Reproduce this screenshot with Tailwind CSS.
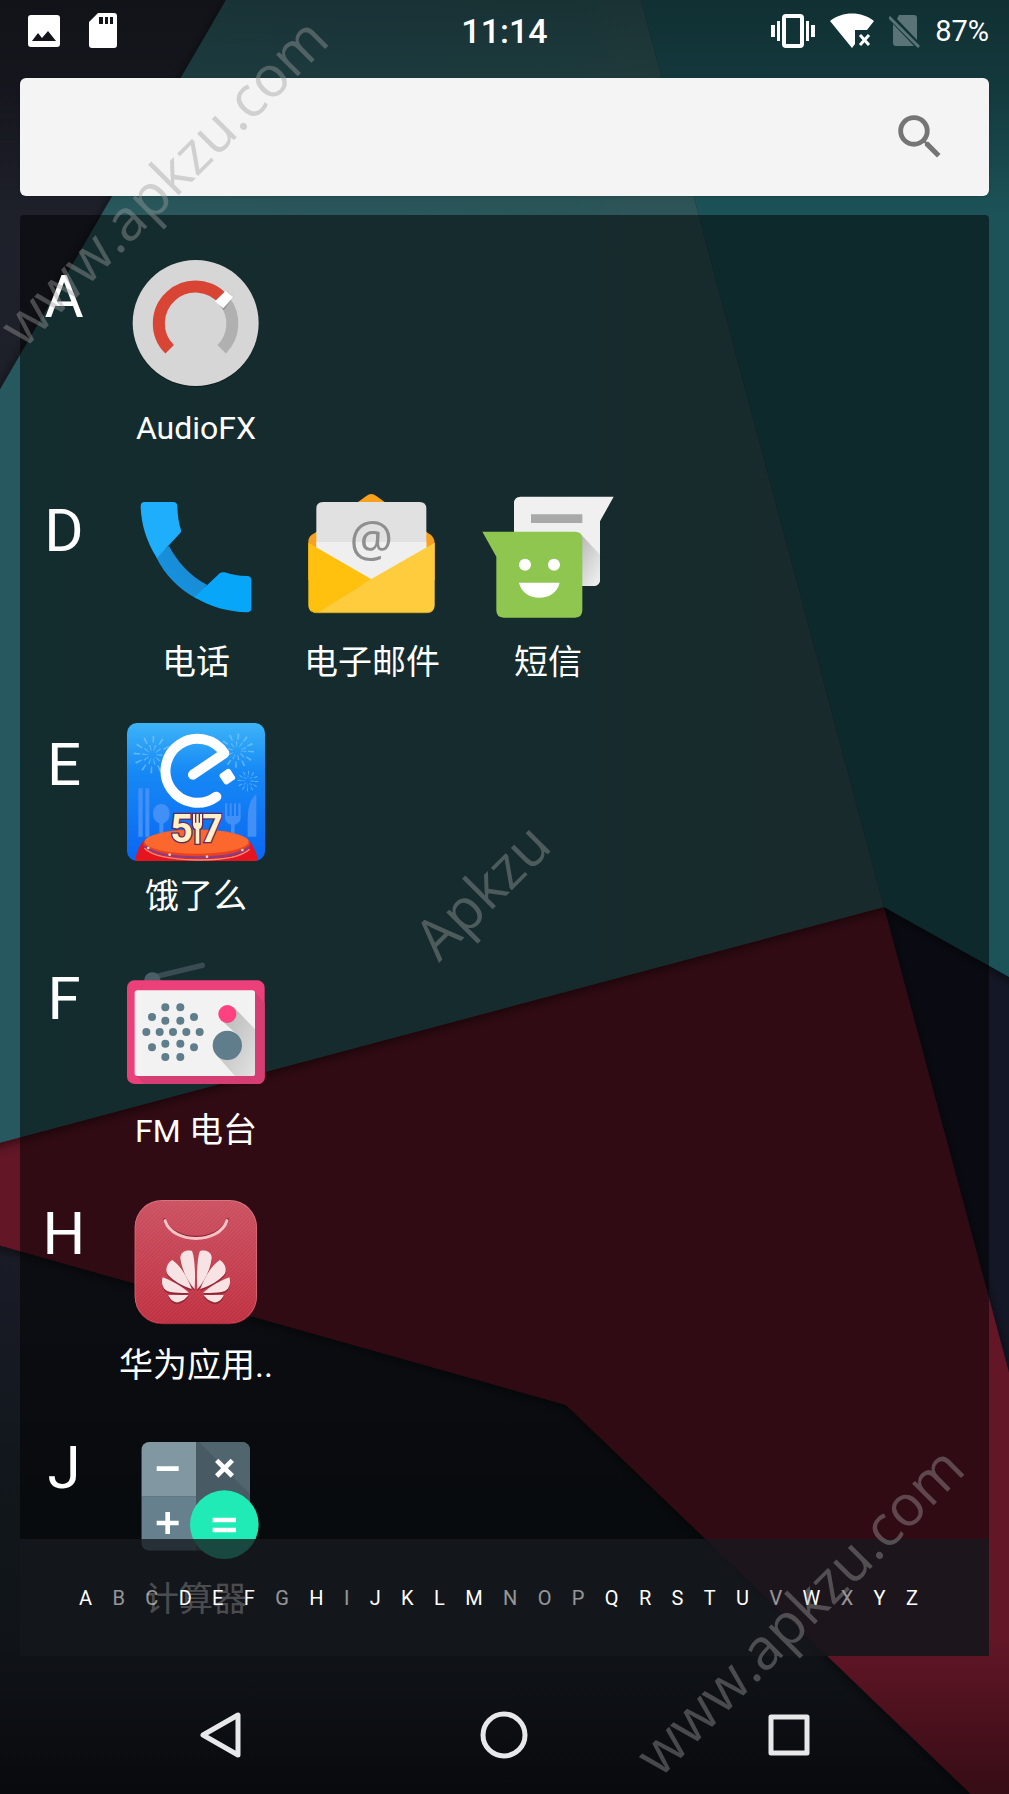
<!DOCTYPE html>
<html lang="zh-CN">

<head>
    <meta charset="UTF-8" />
    <meta name="viewport" content="width=device-width, initial-scale=1" />
    <title>App drawer</title>
    <script src="https://cdn.jsdelivr.net/npm/@tailwindcss/browser@4"></script>
</head>

<body class="relative flex h-screen flex-col overflow-hidden bg-[#14161d] font-[Roboto,'Noto_Sans_CJK_SC',sans-serif] text-white">
    <!-- wallpaper -->
    <svg class="absolute inset-0 -z-10 h-full w-full" viewBox="0 0 1009 1794" preserveAspectRatio="xMidYMid slice" aria-hidden="true">
        <defs>
            <linearGradient id="night" x1="0" y1="0" x2="0" y2="1">
                <stop offset="0" stop-color="#1f212b" />
                <stop offset="0.7" stop-color="#191b26" />
                <stop offset="0.85" stop-color="#10161a" />
                <stop offset="1" stop-color="#101218" />
            </linearGradient>
            <linearGradient id="scrimTop" x1="0" y1="0" x2="0" y2="1">
                <stop offset="0" stop-color="#000" stop-opacity="0.42" />
                <stop offset="0.4" stop-color="#000" stop-opacity="0.32" />
                <stop offset="1" stop-color="#000" stop-opacity="0" />
            </linearGradient>
            <linearGradient id="scrimBottom" x1="0" y1="0" x2="0" y2="1">
                <stop offset="0" stop-color="#000" stop-opacity="0" />
                <stop offset="1" stop-color="#000" stop-opacity="0.45" />
            </linearGradient>
            <linearGradient id="tealMain" x1="0" y1="0" x2="1" y2="0">
                <stop offset="0" stop-color="#28595e" />
                <stop offset="0.6" stop-color="#2b565a" />
                <stop offset="1" stop-color="#325558" />
            </linearGradient>
            <filter id="edge" x="-5%" y="-5%" width="110%" height="110%">
                <feDropShadow dx="0" dy="2" stdDeviation="6" flood-color="#000" flood-opacity="0.6" />
            </filter>
        </defs>
        <rect width="1009" height="1794" fill="url(#night)" />
        <path d="M884 907 1009 977V1380L884 907Z" fill="#141725" />
        <path d="M-20 1100 884 880V907L1029 1447V1850L566 1405 -20 1240Z" fill="#621426" filter="url(#edge)" />
        <g filter="url(#edge)">
            <path d="M226 0H641L884 907 -20 1148V424Z" fill="url(#tealMain)" />
            <path d="M641 0H1029V988L884 907Z" fill="#1b5259" />
        </g>
        <rect width="1009" height="215" fill="url(#scrimTop)" />
        <rect y="1640" width="1009" height="154" fill="url(#scrimBottom)" />
    </svg>

    <!-- status bar -->
    <header class="grid h-[62px] shrink-0 grid-cols-3 items-center px-5">
        <div class="flex items-center gap-7 pl-2">
            <svg class="h-8 w-8" viewBox="0 0 32 32" fill="#fff">
                <path fill-rule="evenodd" d="M3 0H29a3 3 0 0 1 3 3V29a3 3 0 0 1-3 3H3a3 3 0 0 1-3-3V3a3 3 0 0 1 3-3ZM4 26H28L20 16 14 23 10 18Z" />
            </svg>
            <svg class="h-9 w-[30px]" viewBox="0 0 30 36" fill="#fff">
                <path fill-rule="evenodd" d="M10 0H26a3 3 0 0 1 3 3V32a3 3 0 0 1-3 3H4a3 3 0 0 1-3-3V9ZM11 4v7h4V4ZM17 4v7h3V4ZM22 4v7h3V4Z" />
            </svg>
        </div>
        <time class="text-center text-[34px] leading-10 font-medium">11:14</time>
        <div class="flex items-center justify-end gap-[15px]">
            <svg class="h-9 w-11" viewBox="0 0 44 36" fill="#fff">
                <path d="M0 12h4v12H0ZM6 8h3v20H6ZM40 12h4v12h-4ZM35 8h3v20h-3Z" />
                <rect x="13" y="3" width="18" height="30" rx="2" fill="none" stroke="#fff" stroke-width="4" />
            </svg>
            <svg class="h-9 w-11" viewBox="0 0 44 36">
                <path d="M0 8C12-2 32-2 44 8L37 17H25V31L22 35Z" fill="#fff" />
                <path d="M30 22 39 32M39 22 30 32" stroke="#fff" stroke-width="3" />
            </svg>
            <svg class="h-9 w-[31px]" viewBox="0 0 31 36">
                <path d="M10 2H25a3 3 0 0 1 3 3V27L8 6ZM4 11 25 33H7a3 3 0 0 1-3-3Z" fill="#5a7376" />
                <path d="M0 4 30 34" stroke="#5a7376" stroke-width="3" />
            </svg>
            <span class="text-[29px] leading-10">87%</span>
        </div>
    </header>

    <!-- search -->
    <form class="mx-5 mt-4 flex h-[118px] shrink-0 items-center rounded-md bg-[#f4f4f4] pr-10 pl-8 shadow">
        <input type="search" aria-label="搜索" class="h-full min-w-0 flex-1 bg-transparent text-[34px] text-gray-800 outline-none" />
        <button type="submit" aria-label="搜索">
            <svg class="h-[58px] w-[58px]" viewBox="0 0 24 24" fill="#757575">
                <path d="M15.5 14h-.79l-.28-.27A6.47 6.47 0 0 0 16 9.5 6.5 6.5 0 1 0 9.5 16c1.61 0 3.09-.59 4.23-1.57l.27.28v.79l5 4.99L20.49 19l-4.99-5zm-6 0C7.01 14 5 11.99 5 9.5S7.01 5 9.5 5 14 7.01 14 9.5 11.99 14 9.5 14z" />
            </svg>
        </button>
    </form>

    <!-- app list -->
    <main class="relative mx-5 mt-[19px] min-h-0 flex-1 overflow-hidden rounded-t bg-black/50">
        <div class="flex flex-col gap-[41px] pt-10">
            <section class="flex">
                <h2 class="w-[88px] pt-3 text-center text-[60px] leading-[60px]">A</h2>
                <a href="#audiofx" class="flex w-44 flex-col items-center gap-[15px]">
                    <svg class="h-[138px] w-[138px]" viewBox="84 45 414 414">
                        <circle cx="290" cy="252" r="189" fill="#0006" />
                        <circle cx="290" cy="249" r="189" fill="#d6d6d6" />
                        <g fill="none" stroke-width="36">
                            <path d="M212 328A110 110 0 1 1 376 182" stroke="#d84535" />
                            <path d="M376 182A110 110 0 0 1 368 328" stroke="#b0b0b0" />
                        </g>
                        <path d="M352 184 382 152 404 170 374 210Z" fill="#0003" />
                        <path d="M348 184 380 152 403 171 373 205Z" fill="#fff" />
                    </svg>
                    <span class="text-[32px] leading-10">AudioFX</span>
                </a>
            </section>

            <section class="flex">
                <h2 class="w-[88px] pt-3 text-center text-[60px] leading-[60px]">D</h2>
                <a href="#phone" class="flex w-44 flex-col items-center gap-[15px]">
                    <svg class="h-[138px] w-[138px]" viewBox="24 27 414 414">
                        <defs>
                            <linearGradient id="handle" x1="0" y1="1" x2="1" y2="0">
                                <stop offset="0" stop-color="#1496e6" />
                                <stop offset="1" stop-color="#1c86cc" />
                            </linearGradient>
                        </defs>
                        <path d="M110 228 150 198C176 246 212 288 264 314L234 356C180 328 136 284 110 228Z" fill="url(#handle)" />
                        <path d="M77 66H163Q174 66 175 78C176 104 178 126 186 150Q187 156 183 160L114 234C80 182 66 126 65 79Q65 66 77 66Z" fill="#1eaefc" />
                        <path d="M226 352 302 280Q308 275 316 277C338 284 360 288 384 288Q397 288 397 301V384Q397 397 384 397C326 396 274 380 226 352Z" fill="#08a6f8" />
                    </svg>
                    <span class="text-[34px] leading-10">电话</span>
                </a>
                <a href="#email" class="flex w-44 flex-col items-center gap-[15px]">
                    <svg class="h-[138px] w-[138px]" viewBox="552 27 414 414">
                        <path d="M568 190Q566 168 586 160L742 48Q757 36 772 48L928 160Q947 170 947 190V300H568Z" fill="#f9a01f" />
                        <path d="M592 86Q592 66 612 66H902Q922 66 922 86V260L757 340 592 260Z" fill="#e1e1e1" />
                        <path d="M592 186H922V240L757 320 592 240Z" fill="#efefef" />
                        <text x="757" y="227" text-anchor="middle" font-family="'Open Sans', sans-serif" font-size="146" fill="#8f8f8f">@</text>
                        <path d="M568 188 757 298 600 398H590Q568 398 568 376Z" fill="#ffc10e" />
                        <path d="M947 188V376Q947 398 925 398H596L757 297Z" fill="#ffcc3e" />
                        <path d="M576 391Q582 398 590 398H925Q936 398 942 390" fill="none" stroke="#d9a520" stroke-width="3" />
                    </svg>
                    <span class="text-[34px] leading-10">电子邮件</span>
                </a>
                <a href="#messages" class="flex w-44 flex-col items-center gap-[15px]">
                    <svg class="h-[138px] w-[138px]" viewBox="1080 27 414 414">
                        <defs>
                            <linearGradient id="bubbleShade" x1="0" y1="0" x2="0.7" y2="1">
                                <stop offset="0" stop-color="#b5b5b5" />
                                <stop offset="1" stop-color="#ececec" />
                            </linearGradient>
                        </defs>
                        <path d="M1205 50H1484L1443 124V298Q1443 318 1423 318H1205Q1185 318 1185 298V70Q1185 50 1205 50Z" fill="#f0f0f0" />
                        <path d="M1385 162 1443 224V298Q1443 318 1423 318H1380Z" fill="url(#bubbleShade)" />
                        <path d="M1236 103H1390V129H1236Z" fill="#a9a9a9" />
                        <path d="M1090 155H1368Q1390 155 1390 177V391Q1390 413 1368 413H1154Q1132 413 1132 391V230Z" fill="#8fc64f" />
                        <circle cx="1218" cy="254" r="18" fill="#fff" />
                        <circle cx="1305" cy="254" r="18" fill="#fff" />
                        <path d="M1200 308H1322C1316 336 1292 353 1261 353S1206 336 1200 308Z" fill="#fff" />
                    </svg>
                    <span class="text-[34px] leading-10">短信</span>
                </a>
            </section>

            <section class="flex">
                <h2 class="w-[88px] pt-3 text-center text-[60px] leading-[60px]">E</h2>
                <a href="#eleme" class="flex w-44 flex-col items-center gap-[15px]">
                    <svg class="h-[138px] w-[138px]" viewBox="54 39 414 414">
                        <defs>
                            <linearGradient id="sky" x1="0" y1="0" x2="0" y2="1">
                                <stop offset="0" stop-color="#3db4f8" />
                                <stop offset="0.35" stop-color="#1689f5" />
                                <stop offset="1" stop-color="#0a66f2" />
                            </linearGradient>
                            <clipPath id="tile"><rect x="54" y="39" width="414" height="414" rx="30" /></clipPath>
                        </defs>
                        <g clip-path="url(#tile)">
                            <path d="M54 39H468V453H54Z" fill="url(#sky)" />
                            <!-- fireworks -->
                            <g fill="none" stroke="#8fd0ff" stroke-opacity="0.55">
                                <circle cx="130" cy="134" r="46" stroke-width="20" stroke-dasharray="5 19" />
                                <circle cx="130" cy="134" r="21" stroke-width="18" stroke-dasharray="3 10" />
                                <circle cx="384" cy="122" r="42" stroke-width="18" stroke-dasharray="5 17" />
                                <circle cx="384" cy="122" r="20" stroke-width="16" stroke-dasharray="3 10" />
                                <circle cx="417" cy="213" r="25" stroke-width="12" stroke-dasharray="3 10" />
                                <circle cx="417" cy="213" r="12" stroke-width="9" stroke-dasharray="2 7" />
                            </g>
                            <!-- cutlery -->
                            <g fill="#4090f8">
                                <path d="M88 235H101V380H88ZM109 235H121V380H109ZM348 280H355V318H362V280H368V318H375V280H381V318H388V280H395V325Q393 340 377 344V380H366V344Q350 340 348 325ZM442 252V380H416V330Q416 272 442 252Z" />
                                <ellipse cx="157" cy="311" rx="25" ry="30" />
                                <path d="M151 335H163V380H151Z" />
                            </g>
                            <!-- drum -->
                            <path d="M78 453Q86 412 104 392H420Q440 415 448 453Z" fill="#e5141f" />
                            <ellipse cx="263" cy="402" rx="160" ry="44" fill="#e8431d" />
                            <ellipse cx="263" cy="395" rx="156" ry="36" fill="#fb672c" />
                            <path d="M106 408Q140 440 262 442T422 410" fill="none" stroke="#8a3c8c" stroke-width="7" />
                            <path d="M106 415Q140 448 262 450T422 418" fill="none" stroke="#ff8b6a" stroke-width="4" />
                            <g fill="#ffd0b0">
                                <circle cx="118" cy="414" r="4" />
                                <circle cx="182" cy="434" r="4" />
                                <circle cx="294" cy="440" r="4" />
                                <circle cx="400" cy="420" r="4" />
                            </g>
                            <path d="M252 194 346 130A96 96 0 1 0 322 260" fill="none" stroke="#fff" stroke-width="30" stroke-linecap="round" stroke-linejoin="round" />
                            <rect x="336" y="181" width="38" height="38" rx="8" transform="rotate(-34 355 200)" fill="#fff" />
                            <g fill="#fff0c8" stroke="#5b2a5e" stroke-width="8" paint-order="stroke" font-family="Roboto, sans-serif" font-weight="700" font-size="118">
                                <text x="184" y="396">5</text>
                                <text x="274" y="396">7</text>
                                <path d="M252 312H258V338H262V312H269V338H273V312H279V345Q278 354 271 357V401H260V357Q253 354 252 345Z" />
                            </g>
                        </g>
                    </svg>
                    <span class="text-[34px] leading-10">饿了么</span>
                </a>
            </section>

            <section class="flex">
                <h2 class="w-[88px] pt-3 text-center text-[60px] leading-[60px]">F</h2>
                <a href="#fm" class="flex w-44 flex-col items-center gap-[15px]">
                    <svg class="h-[138px] w-[138px]" viewBox="54 21 414 414">
                        <defs>
                            <linearGradient id="knobShade" x1="0" y1="0" x2="1" y2="1">
                                <stop offset="0" stop-color="#b4b4b4" />
                                <stop offset="1" stop-color="#e2e2e2" />
                            </linearGradient>
                        </defs>
                        <path d="M130 82 280 46" stroke="#3a4b52" stroke-width="16" stroke-linecap="round" />
                        <path d="M105 92A25 25 0 0 1 155 92Z" fill="#4a5f68" />
                        <rect x="54" y="91" width="413" height="311" rx="22" fill="#ec407a" />
                        <path d="M437 125 467 160V380Q467 402 445 402H104L78 376Z" fill="#d63d72" />
                        <rect x="77" y="121" width="361" height="257" rx="8" fill="#f2f2f2" />
                        <path d="M375 172 438 238V370Q438 378 430 378H378L325 318 380 250 336 210Z" fill="url(#knobShade)" />
                        <circle cx="355" cy="192" r="27" fill="#ff4081" />
                        <circle cx="355" cy="286" r="44" fill="#607d8b" />
                        <g fill="#607d8b">
                            <circle cx="169" cy="172" r="12" />
                            <circle cx="214" cy="172" r="12" />
                            <circle cx="129" cy="201" r="12" />
                            <circle cx="169" cy="212" r="12" />
                            <circle cx="214" cy="212" r="12" />
                            <circle cx="255" cy="201" r="12" />
                            <circle cx="112" cy="246" r="12" />
                            <circle cx="152" cy="246" r="12" />
                            <circle cx="192" cy="246" r="12" />
                            <circle cx="232" cy="246" r="12" />
                            <circle cx="272" cy="246" r="12" />
                            <circle cx="129" cy="292" r="12" />
                            <circle cx="169" cy="281" r="12" />
                            <circle cx="214" cy="281" r="12" />
                            <circle cx="255" cy="292" r="12" />
                            <circle cx="169" cy="321" r="12" />
                            <circle cx="214" cy="321" r="12" />
                        </g>
                    </svg>
                    <span class="text-[34px] leading-10"><span class="text-[32px]">FM</span> 电台</span>
                </a>
            </section>

            <section class="flex">
                <h2 class="w-[88px] pt-3 text-center text-[60px] leading-[60px]">H</h2>
                <a href="#appgallery" class="flex w-44 flex-col items-center gap-[15px]">
                    <svg class="h-[138px] w-[138px]" viewBox="54 33 414 414">
                        <defs>
                            <linearGradient id="bag" x1="0" y1="0" x2="0" y2="1">
                                <stop offset="0" stop-color="#cb5060" />
                                <stop offset="1" stop-color="#bf2f40" />
                            </linearGradient>
                            <pattern id="weave" width="8" height="8" patternUnits="userSpaceOnUse" patternTransform="rotate(-45)">
                                <path d="M0 0H8V3H0Z" fill="#fff" fill-opacity="0.07" />
                            </pattern>
                            <g id="petals">
                                <path d="M257 325C260 280 257 228 249 210C232 205 213 213 214 232C217 264 236 302 257 325Z" />
                                <path d="M248 324C236 290 216 255 190 237C176 245 168 262 174 277C186 297 220 315 248 324Z" />
                                <path d="M240 335C216 315 186 298 161 289C156 305 160 322 174 330C192 336 220 337 240 335Z" />
                                <path d="M238 342H178C182 355 195 366 208 364C222 360 232 352 238 342Z" />
                            </g>
                        </defs>
                        <rect x="77" y="60" width="367" height="370" rx="82" fill="#8c1a2b" />
                        <rect x="77" y="57" width="367" height="370" rx="82" fill="#d8747f" />
                        <rect x="79" y="60" width="363" height="366" rx="80" fill="url(#bag)" />
                        <rect x="79" y="60" width="363" height="366" rx="80" fill="url(#weave)" />
                        <path d="M166 116C190 186 332 186 356 116" fill="none" stroke="#8f2634" stroke-width="9" stroke-linecap="round" />
                        <path d="M168 119C192 190 330 190 354 119" fill="none" stroke="#f5c3c6" stroke-width="9" stroke-linecap="round" />
                        <g fill="#7c1c29" fill-opacity="0.7" transform="translate(0 5)">
                            <use href="#petals" />
                            <use href="#petals" transform="matrix(-1 0 0 1 522 0)" />
                        </g>
                        <g fill="#f7e3e3">
                            <use href="#petals" />
                            <use href="#petals" transform="matrix(-1 0 0 1 522 0)" />
                        </g>
                    </svg>
                    <span class="text-[34px] leading-10">华为应用..</span>
                </a>
            </section>

            <section class="flex">
                <h2 class="w-[88px] pt-3 text-center text-[60px] leading-[60px]">J</h2>
                <a href="#calculator" class="flex w-44 flex-col items-center gap-[15px]">
                    <svg class="h-[138px] w-[138px]" viewBox="384 75 414 414">
                        <defs>
                            <clipPath id="keys"><rect x="427" y="123" width="326" height="326" rx="24" /></clipPath>
                        </defs>
                        <g clip-path="url(#keys)">
                            <path d="M427 123H591V287H427Z" fill="#8198a3" />
                            <path d="M427 287H591V449H427Z" fill="#66808d" />
                            <path d="M591 123H753V449H591Z" fill="#485a63" />
                            <path d="M600 123H753V280Z" fill="#51656f" />
                        </g>
                        <circle cx="676" cy="371" r="103" fill="#20eab6" />
                        <g fill="none" stroke="#fff" stroke-width="14">
                            <path d="M473 203H539M473 366H539M506 333V399M641 357H711M641 387H711" />
                            <path d="M653 178 700 225M700 178 653 225" />
                        </g>
                    </svg>
                    <span class="text-[34px] leading-10">计算器</span>
                </a>
            </section>
        </div>

        <!-- letter index, dimmed where no app starts with the letter -->
        <nav aria-label="索引" class="absolute inset-x-0 bottom-0 flex h-[117px] items-center justify-between bg-[#171a1f]/78 pr-[71px] pl-[59px] text-xl">
            <a href="#A">A</a>
            <a href="#B" class="text-white/55">B</a>
            <a href="#C" class="text-white/55">C</a>
            <a href="#D">D</a>
            <a href="#E">E</a>
            <a href="#F">F</a>
            <a href="#G" class="text-white/55">G</a>
            <a href="#H">H</a>
            <a href="#I" class="text-white/55">I</a>
            <a href="#J">J</a>
            <a href="#K">K</a>
            <a href="#L">L</a>
            <a href="#M">M</a>
            <a href="#N" class="text-white/55">N</a>
            <a href="#O" class="text-white/55">O</a>
            <a href="#P" class="text-white/55">P</a>
            <a href="#Q">Q</a>
            <a href="#R">R</a>
            <a href="#S">S</a>
            <a href="#T">T</a>
            <a href="#U">U</a>
            <a href="#V" class="text-white/55">V</a>
            <a href="#W">W</a>
            <a href="#X" class="text-white/55">X</a>
            <a href="#Y">Y</a>
            <a href="#Z">Z</a>
        </nav>
    </main>

    <!-- system navigation -->
    <footer class="grid h-[138px] shrink-0 grid-cols-3 items-center justify-items-center px-[78px] pt-5">
        <button type="button" aria-label="返回">
            <svg class="h-[50px] w-[50px]" viewBox="0 0 50 50" fill="none" stroke="#e8e8ea" stroke-width="5" stroke-linejoin="round">
                <path d="M43 5V45L8 25Z" />
            </svg>
        </button>
        <button type="button" aria-label="主屏幕">
            <svg class="h-[50px] w-[50px]" viewBox="0 0 50 50" fill="none" stroke="#e8e8ea" stroke-width="5">
                <circle cx="25" cy="25" r="21" />
            </svg>
        </button>
        <button type="button" aria-label="最近任务">
            <svg class="h-[50px] w-[50px]" viewBox="0 0 50 50" fill="none" stroke="#e8e8ea" stroke-width="5" stroke-linejoin="round">
                <path d="M7 7H43V43H7Z" />
            </svg>
        </button>
    </footer>

    <!-- watermark -->
    <svg class="pointer-events-none absolute inset-0 h-full w-full font-['Open_Sans','Noto_Sans',sans-serif] text-[57px]" viewBox="0 0 1009 1794" preserveAspectRatio="xMidYMid slice" fill="#9d9d9d" fill-opacity="0.42">
        <text transform="translate(24 350) rotate(-45)">www.apkzu.com</text>
        <text transform="translate(439 963) rotate(-45)">Apkzu</text>
        <text transform="translate(660 1779) rotate(-45)">www.apkzu.com</text>
    </svg>
</body>

</html>
